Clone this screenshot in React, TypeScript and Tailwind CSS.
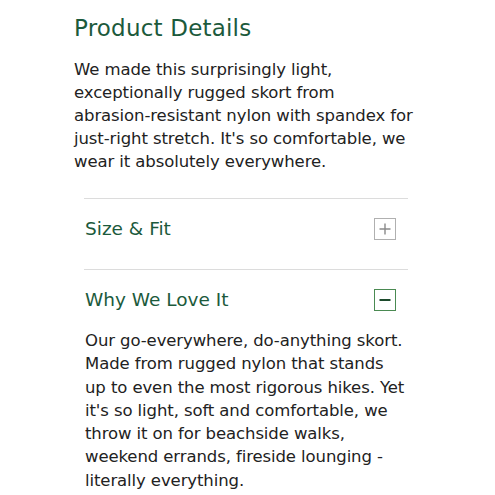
const intro = [
    'We made this surprisingly light,',
    'exceptionally rugged skort from',
    'abrasion-resistant nylon with spandex for',
    "just-right stretch. It's so comfortable, we",
    'wear it absolutely everywhere.',
];

const love = [
    'Our go-everywhere, do-anything skort.',
    'Made from rugged nylon that stands',
    'up to even the most rigorous hikes. Yet',
    "it's so light, soft and comfortable, we",
    'throw it on for beachside walks,',
    'weekend errands, fireside lounging -',
    'literally everything.',
];

export default function App() {
    const font = { fontFamily: '"DejaVu Sans", "Open Sans", sans-serif' };
    return (
        <div className="w-[495px] h-[495px] bg-white overflow-hidden" style={font}>
            <div className="pl-[74px] pt-[12px]">
                <h2 className="text-[23px] leading-[32px] text-[#1c5a3c] tracking-[0.2px]">Product Details</h2>
                <div className="mt-[14px] text-[16.5px] leading-[23px] text-[#222] tracking-[-0.1px]">
                    {intro.map(l => (
                        <div key={l} className="whitespace-nowrap">{l}</div>
                    ))}
                </div>
            </div>

            <div className="ml-[84px] w-[324px] mt-[25px]">
                <div className="border-t border-[#dcdcdc] h-[71px] pb-[11px] flex items-center justify-between pl-[1px] pr-[12px]">
                    <span className="text-[18.5px] text-[#1c5a3c]">Size &amp; Fit</span>
                    <span className="w-[22px] h-[22px] border border-[#b0b0b0] flex items-center justify-center">
                        <svg width="14" height="14" viewBox="0 0 14 14">
                            <path d="M7 1.5v11M1.5 7h11" stroke="#8a8a8a" strokeWidth="1.4" />
                        </svg>
                    </span>
                </div>
                <div className="border-t border-[#dcdcdc] h-[60px] flex items-center justify-between pl-[1px] pr-[12px]">
                    <span className="text-[18.5px] text-[#1c5a3c]">Why We Love It</span>
                    <span className="w-[22px] h-[22px] border-[1.5px] border-[#4a8a52] flex items-center justify-center">
                        <svg width="14" height="14" viewBox="0 0 14 14">
                            <path d="M1.5 7h11" stroke="#1c4a2c" strokeWidth="2" />
                        </svg>
                    </span>
                </div>
                <div className="pl-[1px] text-[16.5px] leading-[23.3px] text-[#222] tracking-[-0.1px]">
                    {love.map(l => (
                        <div key={l} className="whitespace-nowrap">{l}</div>
                    ))}
                </div>
            </div>
        </div>
    );
}
